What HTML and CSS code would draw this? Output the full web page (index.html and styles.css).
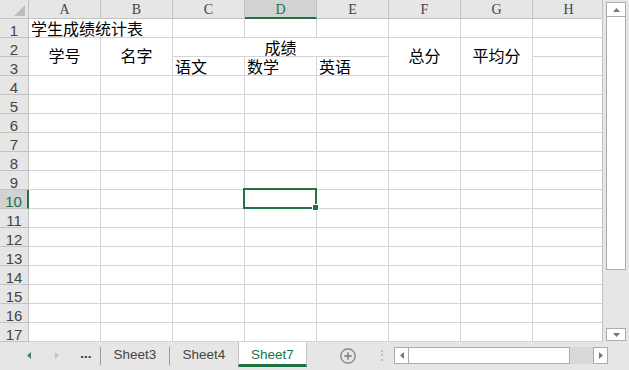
FILE: index.html
```html
<!DOCTYPE html>
<html lang="zh-CN">
<head>
  <meta charset="UTF-8" />
  <title>学生成绩统计表</title>
  <link rel="stylesheet" href="styles.css">
</head>
<body>
  <div class="app">
    <div class="main">
      <div class="sheet">
        <div class="grid">
          <div class="corner"></div>
          <div class="ch">A</div><div class="ch">B</div><div class="ch">C</div><div class="ch sel">D</div><div class="ch">E</div><div class="ch">F</div><div class="ch">G</div><div class="ch">H</div><div class="ch"></div>

          <div class="rh">1</div>
          <div class="c span2">学生成绩统计表</div><div class="c"></div><div class="c"></div><div class="c"></div><div class="c"></div><div class="c"></div><div class="c"></div><div class="c"></div>

          <div class="rh">2</div>
          <div class="c rows2">学号</div><div class="c rows2">名字</div><div class="c cols3">成绩</div><div class="c rows2">总分</div><div class="c rows2">平均分</div><div class="c"></div><div class="c"></div>

          <div class="rh">3</div>
          <div class="c">语文</div><div class="c">数学</div><div class="c">英语</div><div class="c"></div><div class="c"></div>

          <div class="rh">4</div>
          <div class="c"></div><div class="c"></div><div class="c"></div><div class="c"></div><div class="c"></div><div class="c"></div><div class="c"></div><div class="c"></div><div class="c"></div>
          <div class="rh">5</div>
          <div class="c"></div><div class="c"></div><div class="c"></div><div class="c"></div><div class="c"></div><div class="c"></div><div class="c"></div><div class="c"></div><div class="c"></div>
          <div class="rh">6</div>
          <div class="c"></div><div class="c"></div><div class="c"></div><div class="c"></div><div class="c"></div><div class="c"></div><div class="c"></div><div class="c"></div><div class="c"></div>
          <div class="rh">7</div>
          <div class="c"></div><div class="c"></div><div class="c"></div><div class="c"></div><div class="c"></div><div class="c"></div><div class="c"></div><div class="c"></div><div class="c"></div>
          <div class="rh">8</div>
          <div class="c"></div><div class="c"></div><div class="c"></div><div class="c"></div><div class="c"></div><div class="c"></div><div class="c"></div><div class="c"></div><div class="c"></div>
          <div class="rh">9</div>
          <div class="c"></div><div class="c"></div><div class="c"></div><div class="c"></div><div class="c"></div><div class="c"></div><div class="c"></div><div class="c"></div><div class="c"></div>
          <div class="rh sel">10</div>
          <div class="c"></div><div class="c"></div><div class="c"></div><div class="c active"></div><div class="c"></div><div class="c"></div><div class="c"></div><div class="c"></div><div class="c"></div>
          <div class="rh">11</div>
          <div class="c"></div><div class="c"></div><div class="c"></div><div class="c"></div><div class="c"></div><div class="c"></div><div class="c"></div><div class="c"></div><div class="c"></div>
          <div class="rh">12</div>
          <div class="c"></div><div class="c"></div><div class="c"></div><div class="c"></div><div class="c"></div><div class="c"></div><div class="c"></div><div class="c"></div><div class="c"></div>
          <div class="rh">13</div>
          <div class="c"></div><div class="c"></div><div class="c"></div><div class="c"></div><div class="c"></div><div class="c"></div><div class="c"></div><div class="c"></div><div class="c"></div>
          <div class="rh">14</div>
          <div class="c"></div><div class="c"></div><div class="c"></div><div class="c"></div><div class="c"></div><div class="c"></div><div class="c"></div><div class="c"></div><div class="c"></div>
          <div class="rh">15</div>
          <div class="c"></div><div class="c"></div><div class="c"></div><div class="c"></div><div class="c"></div><div class="c"></div><div class="c"></div><div class="c"></div><div class="c"></div>
          <div class="rh">16</div>
          <div class="c"></div><div class="c"></div><div class="c"></div><div class="c"></div><div class="c"></div><div class="c"></div><div class="c"></div><div class="c"></div><div class="c"></div>
          <div class="rh">17</div>
          <div class="c"></div><div class="c"></div><div class="c"></div><div class="c"></div><div class="c"></div><div class="c"></div><div class="c"></div><div class="c"></div><div class="c"></div>
        </div>
      </div>

      <div class="vscroll">
        <div class="sbtn up"><svg width="7" height="4" viewBox="0 0 7 4"><path d="M0 4L3.5 0L7 4Z" fill="#777"/></svg></div>
        <div class="vthumb"></div>
        <div class="vtrack"></div>
        <div class="sbtn down"><svg width="7" height="4" viewBox="0 0 7 4"><path d="M0 0L3.5 4L7 0Z" fill="#777"/></svg></div>
      </div>
    </div>

    <div class="tabbar">
      <div class="nav prev"><svg width="4" height="7" viewBox="0 0 4 7"><path d="M4 0L0 3.5L4 7Z" fill="#4a7f5c"/></svg></div>
      <div class="nav next"><svg width="4" height="7" viewBox="0 0 4 7"><path d="M0 0L4 3.5L0 7Z" fill="#c4c4c4"/></svg></div>
      <div class="more">...</div>
      <div class="sep"></div>
      <div class="tab">Sheet3</div>
      <div class="sep"></div>
      <div class="tab">Sheet4</div>
      <div class="tab current">Sheet7</div>
      <div class="add"><svg width="16" height="16" viewBox="0 0 16 16"><circle cx="8" cy="8" r="7.2" fill="none" stroke="#7a7a7a" stroke-width="1.2"/><path d="M8 4.2V11.8M4.2 8H11.8" stroke="#7a7a7a" stroke-width="1.4"/></svg></div>
      <div class="grip">⋮</div>
      <div class="hscroll">
        <div class="sbtn left"><svg width="4" height="7" viewBox="0 0 4 7"><path d="M4 0L0 3.5L4 7Z" fill="#777"/></svg></div>
        <div class="hthumb"></div>
        <div class="htrack"></div>
        <div class="sbtn right"><svg width="4" height="7" viewBox="0 0 4 7"><path d="M0 0L4 3.5L0 7Z" fill="#777"/></svg></div>
      </div>
    </div>
  </div>
</body>
</html>
```

FILE: styles.css
```css
body {
  margin: 0;
  background: #ffffff;
  font-family: "Liberation Sans", Arial, sans-serif;
}

.app {
  width: 629px;
  height: 370px;
  overflow: hidden;
  display: flex;
  flex-direction: column;
}

.main {
  display: flex;
  height: 342px;
}

.sheet {
  width: 608px;
  overflow: hidden;
  background: #fff;
}

.grid {
  display: grid;
  grid-template-columns: 29px repeat(9, 72px);
  grid-template-rows: repeat(18, 19px);
  width: max-content;
}

.grid > div {
  box-sizing: border-box;
  border-right: 1px solid #d4d4d4;
  border-bottom: 1px solid #d4d4d4;
}

/* headers */
.grid > .corner,
.grid > .ch,
.grid > .rh {
  background: #e6e6e6;
  border-color: #c3c3c3;
  color: #444;
}

.corner {
  position: relative;
}

.corner::after {
  content: "";
  position: absolute;
  right: 3px;
  bottom: 2px;
  border-left: 11px solid transparent;
  border-bottom: 11px solid #bdbdbd;
}

.ch {
  font: 14px "Liberation Serif", serif;
  text-align: center;
  line-height: 14px;
  padding-top: 3px;
}

.rh {
  font: 15px "Liberation Sans", Arial, sans-serif;
  text-align: center;
  line-height: 17px;
  padding-top: 3px;
}

.grid > .ch.sel {
  background: #d2d2d2;
  color: #217346;
  border-bottom: 2px solid #217346;
}

.grid > .rh.sel {
  background: #d2d2d2;
  color: #217346;
  border-right: 2px solid #217346;
}

/* cells */
.c {
  font: 16px "Noto Sans CJK SC", sans-serif;
  color: #000;
  line-height: 18px;
  display: flex;
  align-items: flex-end;
  padding-left: 2px;
  white-space: nowrap;
}

.span2 {
  grid-column: span 2;
}

.rows2 {
  grid-row: span 2;
  justify-content: center;
  align-items: center;
  padding-left: 0;
  padding-bottom: 3px;
}

.cols3 {
  grid-column: span 3;
  justify-content: center;
  padding-left: 0;
}

.active {
  position: relative;
}

.active::before {
  content: "";
  position: absolute;
  top: -2px;
  left: -2px;
  right: -1px;
  bottom: -1px;
  border: 2px solid #217346;
}

.active::after {
  content: "";
  position: absolute;
  right: -2px;
  bottom: -2px;
  width: 5px;
  height: 5px;
  background: #217346;
  box-shadow: 0 0 0 1px #fff;
}

/* vertical scrollbar */
.vscroll {
  width: 20px;
  border-left: 1px solid #c3c3c3;
  background: #e6e6e6;
  display: flex;
  flex-direction: column;
  padding: 2px 3px 1px;
}

.sbtn {
  box-sizing: border-box;
  background: #fff;
  border: 1px solid #ababab;
  display: flex;
  align-items: center;
  justify-content: center;
}

.vscroll .sbtn {
  height: 15px;
}

.vscroll .down {
  height: 13px;
}

.vthumb {
  height: 252px;
  background: #fff;
  border: 1px solid #ababab;
  border-top: none;
}

.vtrack {
  flex: 1;
}

/* sheet tabs */
.tabbar {
  flex: 1;
  display: flex;
  align-items: flex-start;
  background: #e6e6e6;
  color: #444;
  font-size: 13.5px;
}

.nav {
  width: 18px;
  height: 26px;
  display: flex;
  align-items: center;
  justify-content: center;
}

.prev {
  margin-left: 20px;
}

.next {
  margin-left: 10px;
}

.more {
  width: 20px;
  margin-left: 10px;
  text-align: center;
  font-weight: bold;
  line-height: 24px;
  color: #333;
}

.sep {
  width: 1px;
  height: 18px;
  margin-top: 5px;
  background: #9c9c9c;
}

.more + .sep {
  margin-left: 4px;
}

.tab {
  width: 68px;
  height: 25px;
  line-height: 26px;
  text-align: center;
}

.tab.current {
  box-sizing: border-box;
  width: 69px;
  background: #fff;
  color: #217346;
  border-left: 1px solid #c3c3c3;
  border-right: 1px solid #c3c3c3;
  border-bottom: 3px solid #217346;
}

.add {
  margin: 6px 0 0 33px;
  height: 16px;
}

.grip {
  width: 6px;
  margin-left: 19px;
  line-height: 28px;
  color: #b0b0b0;
  text-align: center;
}

.hscroll {
  display: flex;
  width: 214px;
  height: 17px;
  margin: 5px 0 0 13px;
}

.hscroll .sbtn {
  width: 15px;
  height: 17px;
}

.hthumb {
  width: 161px;
  box-sizing: border-box;
  background: #fff;
  border: 1px solid #ababab;
  border-left: none;
}

.htrack {
  flex: 1;
  background: #d9d9d9;
}
```
